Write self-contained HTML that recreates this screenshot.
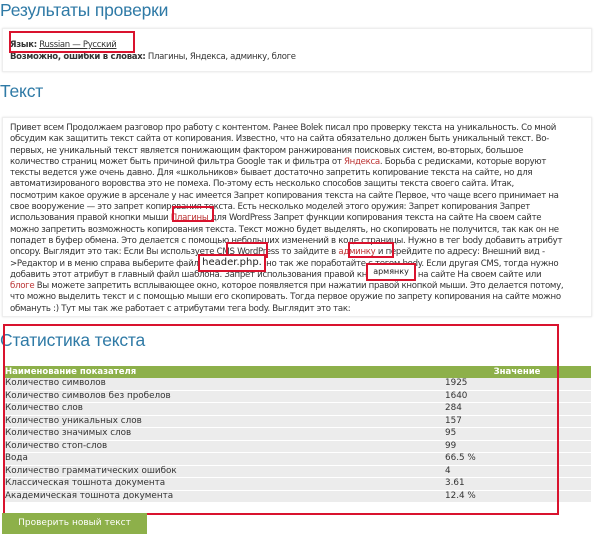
<!DOCTYPE html>
<html><head><meta charset="utf-8"><style>
body{margin:0;width:600px;height:538px;background:#fff;font-family:"DejaVu Sans","Liberation Sans",sans-serif;color:#222;position:relative;overflow:hidden}
.h{position:absolute;left:0;color:#2f7aa6;font-size:17.5px;font-family:"Liberation Sans",sans-serif;letter-spacing:-0.2px}
.box{position:absolute;left:2px;width:588px;border:1px solid #eee;box-shadow:0 0 2px #e4e4e4}
.red{position:absolute;border:2px solid #d9132e}
.t{position:absolute;left:10px;font-size:8.6px;white-space:nowrap;line-height:11.3px;color:#333;letter-spacing:-0.3px}
table{position:absolute;left:3px;top:366px;width:588px;border-collapse:collapse;font-size:8.8px;color:#333}
th{background:#8db04a;color:#fff;font-weight:bold;text-align:left;height:12px;padding:0 2px;font-size:8.5px}
td{background:#ececec;height:11.5px;padding:0 2px;border-bottom:1px solid #fff;line-height:11.5px}
.btn{position:absolute;left:2px;top:513px;width:145px;height:21px;background:#8db04a;color:#fff;font-size:9px;text-align:center;line-height:21px}
</style></head><body>
<div class="h" style="top:0px">Результаты проверки</div>
<div class="box" style="top:28px;height:42px"></div>
<div class="t" style="top:40px;font-size:8.5px;line-height:11.5px"><b>Язык:</b> <u>Russian — Русский</u><br><b>Возможно, ошибки в словах:</b> Плагины, Яндекса, админку, блоге</div>
<div class="red" style="left:9px;top:31px;width:122px;height:18px"></div>
<div class="h" style="top:81px">Текст</div>
<div class="box" style="top:117px;height:198px"></div>
<div class="t" style="top:123px">Привет всем Продолжаем разговор про работу с контентом. Ранее Bolek писал про проверку текста на уникальность. Со мной<br>обсудим как защитить текст сайта от копирования. Известно, что на сайта обязательно должен быть уникальный текст. Во-<br>первых, не уникальный текст является понижающим фактором ранжирования поисковых систем, во-вторых, большое<br>количество страниц может быть причиной фильтра Google так и фильтра от <span style="color:#b33">Яндекса</span>. Борьба с редисками, которые воруют<br>тексты ведется уже очень давно. Для «школьников» бывает достаточно запретить копирование текста на сайте, но для<br>автоматизированого воровства это не помеха. По-этому есть несколько способов защиты текста своего сайта. Итак,<br>посмотрим какое оружие в арсенале у нас имеется Запрет копирования текста на сайте Первое, что чаще всего принимает на<br>свое вооружение — это запрет копирования текста. Есть несколько моделей этого оружия: Запрет копирования Запрет<br>использования правой кнопки мыши <span style="color:#b33">Плагины</span> для WordPress Запрет функции копирования текста на сайте На своем сайте<br>можно запретить возможность копирования текста. Текст можно будет выделять, но скопировать не получится, так как он не<br>попадет в буфер обмена. Это делается с помощью небольших изменений в коде страницы. Нужно в тег body добавить атрибут<br>oncopy. Выглядит это так: Если Вы используете CMS WordPress то зайдите в <span style="color:#b33">админку</span> и перейдите по адресу: Внешний вид -<br>&gt;Редактор и в меню справа выберите файл header.php. Точно так же поработайте с тегом body. Если другая CMS, тогда нужно<br>добавить этот атрибут в главный файл шаблона. Запрет использования правой кнопки мыши на сайте На своем сайте или<br><span style="color:#b33">блоге</span> Вы можете запретить всплывающее окно, которое появляется при нажатии правой кнопкой мыши. Это делается потому,<br>что можно выделить текст и с помощью мыши его скопировать. Тогда первое оружие по запрету копирования на сайте можно<br>обмануть :) Тут мы так же работает с атрибутами тега body. Выглядит это так:</div>
<div class="red" style="left:172px;top:206px;width:38px;height:12px"></div>
<div class="red" style="left:226px;top:242px;width:38px;height:12px"></div>
<div class="red" style="left:348px;top:242px;width:42px;height:12px"></div>
<div class="red" style="left:198px;top:254px;width:64px;height:14px;background:#fff;font-size:10px;line-height:14px;text-align:center">header.php.</div>
<div class="red" style="left:366px;top:263px;width:46px;height:14px;background:#fff;font-size:8px;line-height:14px;text-align:center">армянку</div>
<div class="h" style="top:330px">Статистика текста</div>
<table>
<tr><th style="width:436px">Наименование показателя</th><th style="text-align:center">Значение</th></tr>
<tr><td>Количество символов</td><td>1925</td></tr>
<tr><td>Количество символов без пробелов</td><td>1640</td></tr>
<tr><td>Количество слов</td><td>284</td></tr>
<tr><td>Количество уникальных слов</td><td>157</td></tr>
<tr><td>Количество значимых слов</td><td>95</td></tr>
<tr><td>Количество стоп-слов</td><td>99</td></tr>
<tr><td>Вода</td><td>66.5 %</td></tr>
<tr><td>Количество грамматических ошибок</td><td>4</td></tr>
<tr><td>Классическая тошнота документа</td><td>3.61</td></tr>
<tr><td>Академическая тошнота документа</td><td>12.4 %</td></tr>
</table>
<div class="red" style="left:3px;top:324px;width:552px;height:187px"></div>
<div class="btn">Проверить новый текст</div>
</body></html>
